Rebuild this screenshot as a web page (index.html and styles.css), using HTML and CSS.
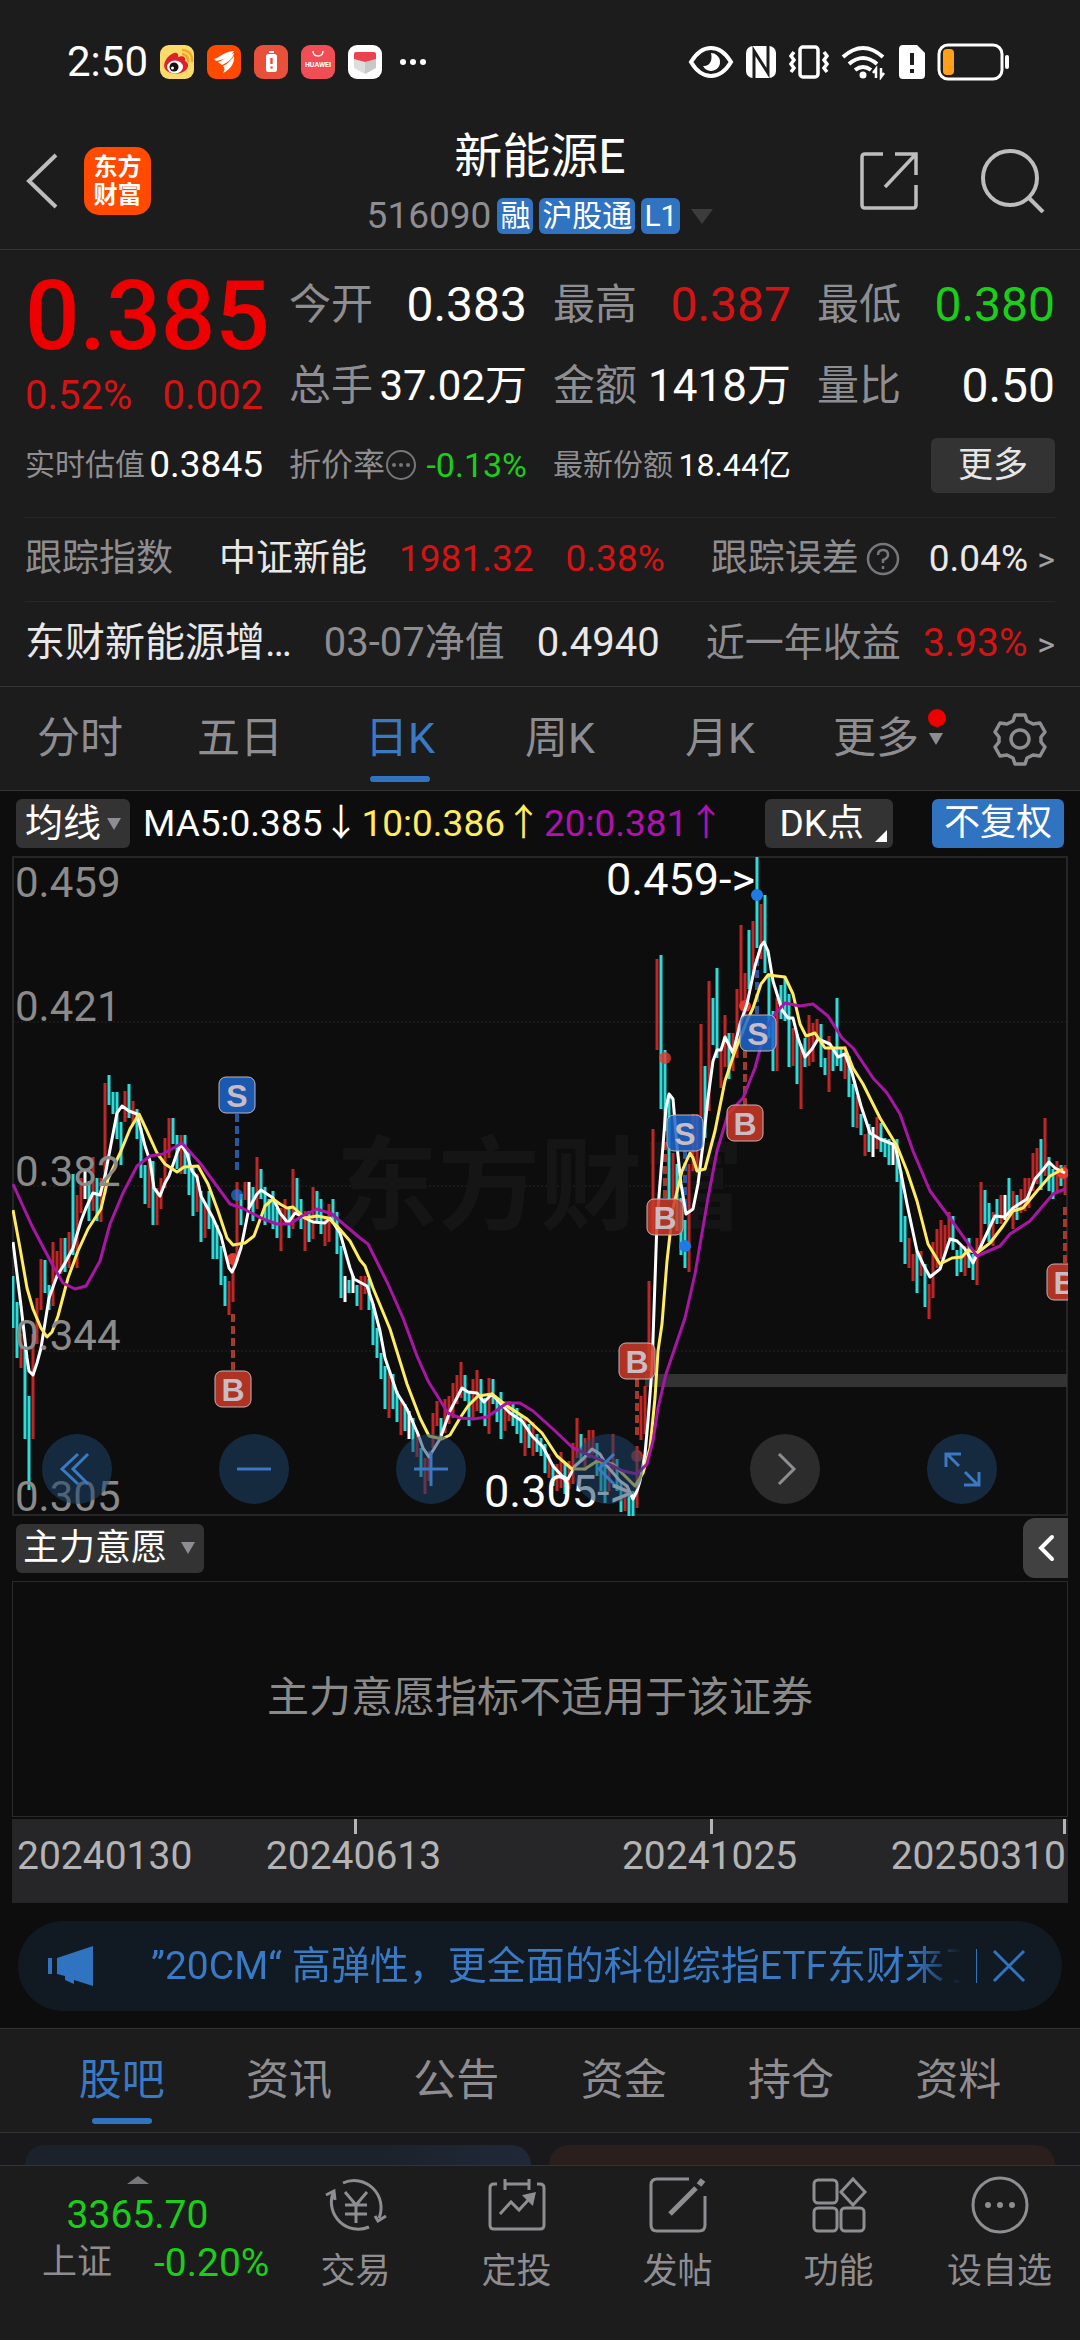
FILE: index.html
```html
<!DOCTYPE html>
<html lang="zh-CN">
<head>
<meta charset="utf-8">
<meta name="viewport" content="width=device-width, initial-scale=1">
<title>新能源E 516090</title>
<link rel="stylesheet" href="styles.css">
</head>
<body>
<div class="status">
  <span class="clock">2:50</span>
  <div class="status-apps">
    <svg class="app" viewBox="0 0 34 34"><rect width="34" height="34" rx="9" fill="#fbdc6a"/><path d="M22 9q7 1 6 8M22 5q11 1 10 12" fill="none" stroke="#f6a623" stroke-width="2.4"/><path d="M14 8c3-1 5 1 4 4 5-2 8 0 7 4 4 2 4 6 1 9-5 5-17 5-21-1-3-6 3-14 9-16z" fill="#e0202a"/><ellipse cx="15" cy="22" rx="8" ry="6.500" fill="#fff"/><circle cx="14" cy="22" r="4.500" fill="#111"/><circle cx="12.500" cy="23" r="1.500" fill="#fff"/></svg>
    <svg class="app" viewBox="0 0 34 34"><rect width="34" height="34" rx="9" fill="#ff4a00"/><path d="M7 14c5-1 9-7 20-8-2 4-8 8-18 10zM11 17c6-2 9-6 16-9-1 5-5 9-12 12zM16 21c5-2 8-6 11-10 1 7-4 14-11 17 2-3 2-5 0-7z" fill="#fff"/></svg>
    <svg class="app" viewBox="0 0 34 34"><rect width="34" height="34" rx="9" fill="#e8503a"/><rect x="12" y="9" width="11" height="18" rx="2.500" fill="#fff"/><path d="M15 6h5v2h-5z" fill="#fff"/><path d="M17.500 13v6M17.500 21.500v2" stroke="#e8503a" stroke-width="2.400"/></svg>
    <svg class="app" viewBox="0 0 34 34"><rect width="34" height="34" rx="9" fill="#f04d55"/><path d="M12 6q0 5 5 5t5-5" fill="none" stroke="#fff" stroke-width="1.400"/><text x="17" y="22" text-anchor="middle" class="app-name">HUAWEI</text></svg>
    <svg class="app" viewBox="0 0 34 34"><rect width="34" height="34" rx="9" fill="#fff"/><path d="M6 13l11 4v12l-11-6z" fill="#ddd"/><path d="M28 13l-11 4v12l11-6z" fill="#c8c8c8"/><path d="M8 7h18q2 0 2 2v5l-11 3-11-3V9q0-2 2-2z" fill="#e9434d"/></svg>
    <svg class="dots" viewBox="0 0 28 8" fill="#fff"><circle cx="4" cy="4" r="3"/><circle cx="14" cy="4" r="3"/><circle cx="24" cy="4" r="3"/></svg>
  </div>
  <div class="status-icons">
    <svg width="46" height="36" viewBox="0 0 46 36" fill="none" stroke="#fff" stroke-width="4"><path d="M3 18C9 8 15 4 23 4s14 4 20 14C37 28 31 32 23 32S9 28 3 18z"/><path d="M23 9a9 9 0 1 1-8 13c6 1 10-5 8-13z" fill="#fff" stroke="none"/></svg>
    <svg width="32" height="36" viewBox="0 0 32 36"><rect x="1" y="2" width="30" height="32" rx="7" fill="#fff"/><path d="M9 34V7l14 22V2" fill="none" stroke="#1c1c1c" stroke-width="3"/></svg>
    <svg width="42" height="36" viewBox="0 0 42 36" fill="none" stroke="#fff" stroke-width="3.500"><rect x="12" y="3" width="18" height="30" rx="3"/><path d="M6 8l-3 4 3 4-3 4 3 4-3 4M36 8l3 4-3 4 3 4-3 4 3 4"/></svg>
    <svg width="46" height="36" viewBox="0 0 46 36" fill="none" stroke="#fff" stroke-width="4"><path d="M2 13q20-18 40 0M8 20q14-12 28 0M14 26q8-6 16 0"/><circle cx="22" cy="31" r="3.500" fill="#fff" stroke="none"/><path d="M35 34v-9l-3 4M40 24v9l3-4" stroke-width="2.500"/></svg>
    <svg width="28" height="34" viewBox="0 0 28 34"><path d="M5 0h14l8 8v22q0 4-4 4H5q-4 0-4-4V4q0-4 4-4z" fill="#fff"/><path d="M14 8v12M14 24v4" stroke="#1c1c1c" stroke-width="4"/></svg>
    <svg width="74" height="38" viewBox="0 0 74 38"><rect x="2" y="2" width="63" height="34" rx="9" fill="none" stroke="#fff" stroke-width="3"/><rect x="6" y="6" width="11" height="26" rx="4" fill="#ff9f1a"/><path d="M70 14v10" stroke="#fff" stroke-width="4" stroke-linecap="round"/></svg>
  </div>
</div>

<header class="header">
  <div class="header-side">
    <button class="icon-btn" aria-label="返回"><svg width="34" height="56" viewBox="0 0 34 56" fill="none" stroke="#bdbdbd" stroke-width="4"><path d="M31 2L4 28l27 26"/></svg></button>
    <a class="logo" href="#"><span>东方</span><span>财富</span></a>
  </div>
  <div class="header-title">
    <h1>新能源E</h1>
    <div class="code"><span>516090</span><b>融</b><b>沪股通</b><b>L1</b><i class="tri tri-code"></i></div>
  </div>
  <div class="header-side header-right">
    <button class="icon-btn" aria-label="分享"><svg width="60" height="60" viewBox="0 0 60 60" fill="none" stroke="#bdbdbd" stroke-width="3.500"><path d="M24 3H6q-3 0-3 3v48q0 3 3 3h48q3 0 3-3V34M36 3h21v21M57 3L26 36"/></svg></button>
    <button class="icon-btn" aria-label="搜索"><svg width="64" height="64" viewBox="0 0 64 64" fill="none" stroke="#bdbdbd" stroke-width="4"><circle cx="29" cy="29" r="27"/><path d="M48 49l14 14"/></svg></button>
  </div>
</header>

<section class="quote">
  <div class="grid">
    <div class="last"><strong>0.385</strong><div class="change"><span>0.52%</span><span>0.002</span></div></div>
    <div class="cell"><span>今开</span><em class="lg">0.383</em></div>
    <div class="cell"><span>最高</span><em class="lg up">0.387</em></div>
    <div class="cell"><span>最低</span><em class="lg down">0.380</em></div>
    <div class="cell"><span>总手</span><em>37.02万</em></div>
    <div class="cell"><span>金额</span><em class="md">1418万</em></div>
    <div class="cell"><span>量比</span><em class="lg">0.50</em></div>
    <div class="cell minor"><span>实时估值</span><em class="fit">0.3845</em></div>
    <div class="cell minor"><span class="ratio">折价率<svg width="32" height="32" viewBox="0 0 32 32"><circle cx="16" cy="16" r="14" fill="none" stroke="#77777b" stroke-width="2"/><g fill="#77777b"><circle cx="9" cy="16" r="2"/><circle cx="16" cy="16" r="2"/><circle cx="23" cy="16" r="2"/></g></svg></span><em class="down disc">-0.13%</em></div>
    <div class="cell minor"><span>最新份额</span><em>18.44亿</em></div>
    <div class="cell minor end"><button class="more">更多</button></div>
  </div>
  <a class="line" href="#">
    <span class="line-main first"><span class="dim">跟踪指数</span><span class="name">中证新能</span><span class="up">1981.32</span><span class="up">0.38%</span></span>
    <span class="line-side"><span class="dim hint">跟踪误差<svg width="34" height="34" viewBox="0 0 34 34" fill="none" stroke="#77777b" stroke-width="2.500"><circle cx="17" cy="17" r="15"/><path d="M12 13q0-5 5-5t5 5q0 3-5 5v3M17 24v3"/></svg></span><span>0.04% <i class="gt">&gt;</i></span></span>
  </a>
  <a class="line wide" href="#">
    <span class="line-main"><span>东财新能源增…</span><span class="dim">03-07净值</span><span>0.4940</span></span>
    <span class="line-side"><span class="dim">近一年收益</span><span><span class="up">3.93%</span> <i class="gt">&gt;</i></span></span>
  </a>
</section>

<nav class="periods">
  <button>分时</button><button>五日</button><button class="on">日K</button><button>周K</button><button>月K</button><button class="more-tab"><span>更多</span><i class="tri tri-tab"></i></button>
  <button class="gear" aria-label="设置"><svg width="54" height="54" viewBox="0 0 54 54" fill="none" stroke="#8e8e92" stroke-width="3.500" stroke-linejoin="round"><path d="M22 3h10l2 6 6 3 7-1 5 9-4 5v5l4 5-5 9-7-1-6 3-2 6H22l-2-6-6-3-7 1-5-9 4-5v-5l-4-5 5-9 7 1 6-3z"/><circle cx="27" cy="27" r="9"/></svg></button>
</nav>

<main class="charts">
  <div class="ma">
    <button class="chip">均线<i class="tri"></i></button>
    <span class="ma-values"><span>MA5:0.385↓</span><span class="y">10:0.386↑</span><span class="p">20:0.381↑</span></span>
    <button class="chip dk">DK点</button>
    <button class="chip blue">不复权</button>
  </div>
  <div class="kline">
    <svg class="plot" viewBox="12 0 1056 660">
      <g fill="none" stroke="#262626" stroke-width="2"><path d="M13 1H1067V659H13z"/><path d="M13 166H1067M13 330H1067M13 495H1067" stroke-dasharray="2 2" stroke-width="1"/></g>
      <text class="mark" x="540" y="366" text-anchor="middle">东方财富</text>
      <path d="M645 518H1067V531H645z" fill="#333"/>
      <path class="r" d="M21 478V512M33 478V583M37 442V488M41 403V454M53 386V450M57 395V422M61 382V418M69 376V412M77 339V412M81 322V357M93 301V355M101 322V366M105 227V338M125 235V266M133 245V268M149 302V352M157 332V369M161 322V353M165 282V332M169 262V302M181 279V318M197 318V356M205 348V382M229 425V459M233 402V446M237 326V405M245 326V344M257 301V353M281 352V395M285 343V368M293 313V373M305 355V395M313 331V383M325 362V390M329 348V386M361 420V454M365 420V438M389 517V562M401 545V579M417 575V601M425 602V638M429 595V625M433 557V592M437 545V570M445 543V577M449 540V568M453 527V562M457 519V548M461 506V542M473 523V563M477 514V555M489 522V578M505 545V575M509 545V565M525 562V600M533 566V600M549 598V622M557 608V635M561 596V632M569 605V633M573 587V628M577 562V602M585 582V615M589 574V602M593 574V598M609 605V635M613 578V615M625 628V655M637 590V652M641 540V584M645 530V578M649 425V515M653 273V378M657 103V194M673 297V345M689 308V416M693 258V315M697 258V315M701 168V262M709 125V255M721 192V232M725 159V211M733 177V215M737 133V202M741 69V150M745 117V162M753 65V118M761 48V103M777 142V215M793 172V210M801 188V253M809 159V210M813 167V206M817 163V185M829 180V236M845 190V223M857 240V272M865 278V300M877 261V293M909 382V412M913 398V425M921 395V420M929 428V463M933 386V442M937 373V412M941 364V403M945 369V398M949 356V383M965 390V420M977 382V429M981 326V392M993 356V390M1001 339V368M1013 335V373M1021 333V357M1025 322V355M1029 322V352M1033 297V335M1037 292V328M1045 262V320M1057 305V335M1065 309V339"/>
      <path class="c" d="M13 420V472M17 446V502M25 492V583M29 540V634M45 404V437M49 429V454M65 382V416M73 318V399M89 325V365M97 322V365M109 219V249M113 236V258M117 236V283M121 266V309M129 228V262M137 253V283M141 272V322M145 309V348M153 305V369M173 262V288M177 279V313M185 279V318M189 295V339M193 309V360M201 335V386M209 335V373M213 362V403M217 369V403M221 390V429M225 420V450M241 338V369M253 331V365M261 313V343M265 331V369M269 343V364M273 335V373M277 352V382M289 352V382M297 322V358M301 343V373M309 355V386M317 335V365M321 343V378M333 343V368M337 356V398M341 390V442M349 424V437M357 429V450M369 423V454M373 448V489M377 472V502M381 497V523M385 510V553M393 518V553M397 535V566M405 548V575M413 562V596M421 592V621M441 562V580M465 519V545M469 535V570M481 523V557M485 542V570M493 523V548M497 542V566M501 536V583M513 548V570M517 552V578M521 558V587M529 568V592M537 578V596M541 582V600M545 588V617M553 608V630M565 608V638M581 578V605M597 587V620M601 605V635M605 608V647M617 603V635M621 625V656M629 635V660M633 635V660M661 99V253M665 194V275M669 242V343M677 308V375M681 342V399M685 364V412M705 210V282M713 142V189M717 112V202M729 177V223M749 74V133M757 1V92M765 39V117M769 117V182M773 155V215M781 129V163M785 122V165M789 138V211M797 178V228M805 182V211M821 168V211M825 202V219M833 192V215M837 142V210M841 193V215M849 200V241M853 228V271M861 258V279M869 268V296M881 267V296M885 282V301M889 283V309M897 283V326M901 315V386M905 360V408M917 395V437M925 408V451M953 360V394M957 394V420M961 390V416M969 382V412M973 398V424M985 334V368M989 347V386M997 343V368M1009 322V360M1017 339V364M1041 283V334M1049 301V335M1053 313V343M1061 309V330"/>
      <path class="w" d="M85 315V343M249 326V352M345 420V446M353 420V437M409 555V583M873 271V301M893 288V309M1005 339V364"/>
      <g fill="#e63b2e"><circle cx="233" cy="403" r="6"/><circle cx="637" cy="600" r="6" opacity=".7"/><circle cx="665" cy="202" r="6" opacity=".8"/><circle cx="745" cy="150" r="6"/><circle cx="1063" cy="317" r="6"/></g>
      <g fill="#1e7be6"><circle cx="237" cy="339" r="6" opacity=".7"/><circle cx="685" cy="390" r="6"/><circle cx="757" cy="39" r="6"/></g>
      <g fill="none" stroke-width="4" stroke-dasharray="8 4"><path stroke="#2857a4" d="M237 258V314M685 295V352M757 102V158"/><path stroke="#a33a2c" d="M233 458V514M637 523V580M665 286V343M745 194V249M1065 351V408"/></g>
      <g fill="none" stroke-width="3" stroke-linejoin="round">
        <polyline stroke="#fff" points="13,386 21,450 27,502 29,515 33,519 37,507 41,492 49,442 57,420 65,407 73,392 81,365 86,352 93,337 100,339 105,320 112,283 117,257 122,250 129,255 137,258 145,290 150,305 154,332 160,340 165,327 169,320 177,297 181,288 187,298 192,315 197,321 201,340 213,362 221,380 229,412 232,416 235,410 241,392 249,352 257,338 261,334 273,342 280,357 288,367 295,357 305,362 313,366 325,367 330,362 340,377 350,412 354,423 367,430 373,448 380,475 385,502 397,537 407,553 418,578 423,592 429,601 440,583 450,555 462,532 468,536 477,537 484,546 492,538 500,547 510,557 522,565 532,580 543,591 553,610 562,620 568,623 575,610 583,603 592,593 600,598 607,610 620,625 627,630 633,643 637,635 640,625 645,598 648,565 652,512 655,425 657,365 662,302 666,252 669,238 673,243 677,290 681,328 686,358 693,353 698,328 703,288 708,242 713,205 717,194 721,194 725,181 733,197 740,168 747,148 755,110 761,90 764,86 768,95 773,125 782,154 788,162 793,162 798,182 805,201 812,193 818,183 830,188 838,201 845,198 852,217 861,250 870,277 880,283 895,289 900,312 907,348 917,395 923,408 930,421 940,413 950,383 957,385 965,393 973,407 980,392 987,377 995,360 1005,361 1013,352 1027,343 1035,323 1042,315 1049,306 1055,312 1065,317"/>
        <polyline stroke="#ffec61" points="13,354 20,392 27,432 33,453 41,472 47,481 52,476 58,460 68,422 78,395 88,373 101,353 108,323 121,295 130,273 139,258 147,275 157,297 165,308 177,316 184,311 198,310 208,328 218,355 227,382 233,389 245,387 254,380 265,350 273,343 280,348 287,352 293,351 305,362 317,360 328,362 337,370 350,385 360,404 365,410 373,432 390,473 407,528 420,562 429,580 442,583 450,579 460,562 468,550 478,540 492,538 507,550 527,563 542,577 557,600 572,613 585,613 597,605 613,608 623,618 635,630 643,617 650,592 655,542 658,495 662,468 667,405 673,352 682,315 690,297 693,302 697,315 705,313 715,275 725,225 735,195 747,165 753,152 761,128 768,119 785,121 793,138 800,168 806,180 815,177 825,192 845,192 853,212 863,228 880,262 897,290 907,315 917,345 928,388 940,408 952,402 962,401 968,394 977,397 990,387 1003,370 1013,355 1023,352 1037,335 1050,320 1063,313"/>
        <polyline stroke="#a916a6" points="13,328 32,370 52,408 63,427 75,433 86,430 100,405 110,368 123,337 137,310 150,300 163,298 182,287 200,307 230,348 242,352 263,363 277,368 290,368 302,360 317,353 332,358 340,365 360,382 368,388 388,428 403,462 417,500 428,525 448,557 460,562 473,563 487,561 507,547 520,547 533,555 553,573 573,592 603,605 623,615 637,618 647,608 653,585 658,552 666,518 685,462 695,418 708,342 717,295 728,258 743,242 755,212 765,175 775,158 785,147 800,150 813,148 828,160 842,182 853,192 873,222 887,237 900,258 913,295 930,335 950,362 977,400 1000,390 1010,378 1030,365 1053,338 1065,333"/>
      </g>
      <g class="flag"><rect class="s" x="219" y="221" width="36" height="36" rx="7"/><rect class="s" x="667" y="259" width="36" height="36" rx="7"/><rect class="s" x="740" y="159" width="36" height="36" rx="7"/><rect class="b" x="215" y="515" width="36" height="36" rx="7"/><rect class="b" x="619" y="487" width="36" height="36" rx="7"/><rect class="b" x="647" y="343" width="36" height="36" rx="7"/><rect class="b" x="727" y="249" width="36" height="36" rx="7"/><rect class="b" x="1047" y="408" width="36" height="36" rx="7"/>
      <text x="237" y="251">S</text><text x="685" y="289">S</text><text x="758" y="189">S</text><text x="233" y="545">B</text><text x="637" y="517">B</text><text x="665" y="373">B</text><text x="745" y="279">B</text><text x="1065" y="438">B</text></g>
      <g class="axis"><text x="15" y="41">0.459</text><text x="15" y="165">0.421</text><text x="15" y="330">0.382</text><text x="15" y="494">0.344</text><text x="15" y="655">0.305</text></g>
      <g class="peak"><text x="755" y="39">0.459-&gt;</text><text x="633" y="651">0.305-&gt;</text></g>
    </svg>
    <div class="tools">
      <button aria-label="最左"><svg viewBox="0 0 70 70"><path d="M36 20L20 35l16 15M46 20L31 35l15 15"/></svg></button>
      <button aria-label="缩小"><svg viewBox="0 0 70 70"><path d="M18 35h34"/></svg></button>
      <button aria-label="放大"><svg viewBox="0 0 70 70"><path d="M18 35h34M35 18v34"/></svg></button>
      <button aria-label="左移"><svg viewBox="0 0 70 70"><path d="M41 20L26 35l15 15"/></svg></button>
      <button class="off" aria-label="右移"><svg viewBox="0 0 70 70"><path d="M29 20l15 15-15 15"/></svg></button>
      <button aria-label="全屏"><svg viewBox="0 0 70 70"><path d="M19 33V20h15M20 20l12 12M52 38v13H37M51 51L38 38"/></svg></button>
    </div>
  </div>
  <div class="sub-head">
    <button class="chip sub">主力意愿<i class="tri"></i></button>
    <button class="fold" aria-label="展开"><svg width="18" height="28" viewBox="0 0 18 28" fill="none" stroke="#fff" stroke-width="4" stroke-linecap="round"><path d="M15 3L4 14l11 11"/></svg></button>
  </div>
  <div class="sub-box">主力意愿指标不适用于该证券</div>
  <div class="dates"><span>20240130</span><span class="tick">20240613</span><span class="tick">20241025</span><span class="tick-end">20250310</span></div>
  <div class="notice">
    <svg width="46" height="40" viewBox="0 0 46 40" fill="#3073c1"><path d="M0 12h4v16H0zM9 12L45 0v40l-19-6v4l-9-4v-4l-8-2z"/></svg>
    <a href="#">”20CM“ 高弹性，更全面的科创综指ETF东财来了</a>
    <button class="icon-btn close" aria-label="关闭"><svg width="34" height="34" viewBox="0 0 34 34" stroke="#3073c1" stroke-width="3"><path d="M2 2l30 30M32 2L2 32"/></svg></button>
  </div>
</main>

<nav class="tabs"><button class="on">股吧</button><button>资讯</button><button>公告</button><button>资金</button><button>持仓</button><button>资料</button></nav>
<div class="feed"><div class="card blue-card"></div><div class="card red-card"></div></div>

<footer class="bottom">
  <a class="index" href="#"><i class="tri-up"></i><span class="down">3365.70</span><span class="index-row"><span>上证</span><span class="down">-0.20%</span></span></a>
  <a href="#"><svg viewBox="0 0 64 58"><path d="M19 7a27 27 0 0 1 36 35M45 51A27 27 0 0 1 9 17M2 19l8-4 1 9M51 40l3 5 8-5M21 16l11 13 11-13M21 29h22M21 38h22M32 29v18"/></svg>交易</a>
  <a href="#"><svg viewBox="0 0 64 58"><path d="M12 8H9q-4 0-4 4v37q0 4 4 4h46q4 0 4-4V12q0-4-4-4h-3M20 3v11M44 3v11M20 8h24M15 38l11-12 8 8 12-13"/><path d="M40 20l9-2-2 9z" fill="#8e8e92"/></svg>定投</a>
  <a href="#"><svg viewBox="0 0 64 58"><path d="M43 3H11q-6 0-6 6v40q0 6 6 6h42q6 0 6-6V20"/><path d="M24 38l26-26" stroke-width="5"/><path d="M53 9l4-5" stroke-width="6"/></svg>发帖</a>
  <a href="#"><svg viewBox="0 0 64 58"><rect x="7" y="4" width="23" height="23" rx="4"/><rect x="7" y="32" width="23" height="23" rx="4"/><rect x="34" y="32" width="23" height="23" rx="4"/><path d="M46 3l12 13-12 13-12-13z"/></svg>功能</a>
  <a href="#"><svg viewBox="0 0 64 58"><circle cx="32" cy="29" r="27"/><g fill="#8e8e92" stroke="none"><circle cx="20" cy="29" r="3"/><circle cx="32" cy="29" r="3"/><circle cx="44" cy="29" r="3"/></g></svg>设自选</a>
</footer>
</body>
</html>
```
FILE: styles.css
```css
* { box-sizing: border-box; }
body {
  margin: 0;
  min-height: 100vh;
  display: flex;
  flex-direction: column;
  background: #1c1c1c;
  color: #fff;
  font-family: Roboto, "Noto Sans CJK SC", sans-serif;
  font-size: 37px;
  line-height: 52px;
  white-space: nowrap;
}
button { margin: 0; padding: 0; border: 0; background: none; color: inherit; font: inherit; }
a { color: inherit; text-decoration: none; }
i, em { font-style: normal; }
svg { display: block; flex: none; }

.up { color: #d41414; }
.down { color: #1ace1a; }
.tri { width: 0; border: 7px solid transparent; border-top: 12px solid #8e8e92; border-bottom: 0; }

/* status bar */
.status { display: flex; align-items: center; padding: 36px 69px 36px 67px; }
.clock { font-size: 42px; }
.status-apps { display: flex; align-items: center; gap: 13px; margin-left: 12px; }
.app { width: 34px; height: 34px; }
.app-name { font: 700 7px Roboto, sans-serif; fill: #fff; }
.dots { width: 28px; height: 8px; margin-left: 4px; }
.status-icons { display: flex; align-items: center; gap: 11px; margin-left: auto; }

/* title bar */
.header {
  display: grid;
  grid-template-columns: 1fr auto 1fr;
  align-items: center;
  padding: 5px 25px 9px;
  border-bottom: 1px solid #333;
}
.header-side { display: flex; align-items: center; gap: 25px; padding-bottom: 8px; }
.header-right { justify-content: flex-end; gap: 62px; padding-right: 10px; }
.logo {
  display: flex;
  flex-direction: column;
  justify-content: center;
  width: 67px;
  height: 68px;
  border-radius: 15px;
  background: #ff4a00;
  font-size: 24px;
  font-weight: 700;
  line-height: 28px;
  text-align: center;
}
.header-title { text-align: center; }
h1 { margin: 0 0 7px; font-size: 48px; font-weight: 400; line-height: 56px; }
.code { display: flex; align-items: center; justify-content: center; gap: 6px; line-height: 48px; font-size: 37px; color: #8e8e92; }
.code b { padding: 0 3px; border-radius: 6px; background: #3073c1; color: #fff; font-size: 30px; font-weight: 400; line-height: 36px; }
.tri-code { border-width: 15px 11px 0; border-top-color: #3c3c3c; margin-left: 5px; }

/* quote block */
.quote { padding: 14px 25px 0; border-bottom: 1px solid #333; }
.grid { display: grid; grid-template-columns: repeat(4, minmax(0, 1fr)); grid-template-rows: 81px 81px 78px; column-gap: 26px; padding-bottom: 13px; }
.last { grid-row: span 2; padding-top: 6px; }
.last strong { display: block; color: #ee0000; font-size: 96px; font-weight: 500; line-height: 92px; }
.change { display: flex; justify-content: space-between; padding-top: 8px; font-size: 40px; color: #d41414; }
.cell { display: flex; align-items: center; justify-content: space-between; font-size: 42px; }
.cell > span { color: #8e8e92; }
.cell .lg { font-size: 48px; }
.cell .md { font-size: 44px; }
.minor, .cell.minor em { font-size: 32px; }
.minor > span { font-size: 30px; }
.minor > .ratio { font-size: 32px; }
.cell.minor .disc { font-size: 34px; }
.cell.minor .fit { font-size: 37px; }
.ratio { display: flex; align-items: center; }
.end { justify-content: flex-end; }
.more { padding: 0 27px; border-radius: 6px; background: #333; color: #e6e6e6; font-size: 35px; line-height: 55px; }
.line { display: flex; gap: 46px; padding: 15px 0 16px; border-top: 1px solid #272727; color: #e8e8e8; }
.wide { font-size: 40px; }
.line-main { display: flex; gap: 32px; }
.first > :first-child { margin-right: 14px; }
.line-side { display: flex; flex: 1; justify-content: space-between; }
.dim { color: #8e8e92; }
.wide .line-side { font-size: 39px; }
.hint { display: flex; align-items: center; gap: 7px; }
.gt { color: #a0a0a4; font-size: 34px; }

/* period tabs and content tabs */
.periods, .tabs { display: grid; border-bottom: 1px solid #333; font-size: 43px; line-height: 103px; color: #8e8e92; }
.periods { grid-template-columns: repeat(6, 160fr) 120fr; }
.tabs { grid-template-columns: repeat(6, 1fr); }
.periods button, .tabs button { position: relative; }
.on { color: #3a79c4; }
.on::after { content: ""; position: absolute; bottom: 8px; left: 50%; width: 60px; height: 6px; margin-left: -30px; border-radius: 3px; background: #3073c1; }
.gear, .more-tab { display: flex; align-items: center; justify-content: center; }
.more-tab { gap: 10px; padding-left: 16px; }
.more-tab::after { content: ""; position: absolute; top: 22px; right: 14px; width: 18px; height: 18px; border-radius: 50%; background: #ee0000; }

/* charts */
.charts { padding-bottom: 17px; background: #0d0d0d; }
.ma { display: flex; align-items: center; padding: 8px 16px; }
.chip { display: flex; align-items: center; gap: 6px; padding: 0 9px; border-radius: 6px; background: #333; font-size: 38px; line-height: 49px; }
.ma-values { display: flex; gap: 2px; margin-left: 13px; line-height: 49px; }
.y { color: #ffec61; }
.p { color: #b013ad; }
.dk { position: relative; margin-left: auto; padding: 0 29px 0 14px; font-size: 37px; }
.dk::after { content: ""; position: absolute; right: 6px; bottom: 6px; border: 6px solid; border-color: transparent #fff #fff transparent; }
.blue { margin-left: 39px; padding: 0 12px; background: #3073c1; font-size: 36px; }
.kline { position: relative; margin: 0 12px; }
.plot { width: 100%; height: auto; overflow: hidden; }
.mark { font-size: 102px; font-weight: 700; fill: #151515; }
.r, .c, .w { fill: none; stroke-width: 3; }
.r { stroke: #c02626; }
.c { stroke: #2ddcda; }
.w { stroke: #fff; }
.flag { font: 700 32px "Liberation Sans", sans-serif; text-anchor: middle; fill: #c9bcc4; }
.flag rect { stroke: #c4b4b8; stroke-width: 1; fill-opacity: .85; }
.s { fill: #1e66cc; }
.b { fill: #ce3a28; }
.axis { font-size: 42px; fill: #8a8a8a; }
.peak { font-size: 45px; fill: #fff; text-anchor: end; }
.tools { position: absolute; right: 0; bottom: 12px; left: 0; display: flex; justify-content: space-between; padding: 0 71px 0 30px; }
.tools button { width: 70px; height: 70px; border-radius: 50%; background: rgba(30, 66, 106, .55); }
.tools svg { fill: none; stroke: #3a79c4; stroke-width: 3; }
.tools .off { background: #2c2c2c; }
.tools .off svg { stroke: #8e8e92; }
.sub-head { display: flex; align-items: center; justify-content: space-between; padding: 2px 12px 3px 16px; }
.sub { gap: 14px; padding: 0 9px 0 7px; font-size: 36px; }
.fold { display: flex; align-items: center; justify-content: center; width: 45px; height: 60px; border-radius: 12px 0 0 12px; background: #414141; }
.sub-box { margin: 0 12px 2px; padding: 90px 0 92px; border: 1px solid #2a2a2a; text-align: center; font-size: 42px; color: #8a8a8a; }
.dates { display: grid; grid-template-columns: auto 74fr auto 182fr auto 94fr auto; margin: 0 12px; padding: 11px 2px 21px 5px; background: #262628; color: #b4b4b4; font-size: 39px; }
.dates span { position: relative; grid-row: 1; }
.dates span:nth-child(2) { grid-column: 3; }
.dates span:nth-child(3) { grid-column: 5; }
.dates span:nth-child(4) { grid-column: 7; }
.tick::before, .tick-end::before { content: ""; position: absolute; top: -11px; left: 50%; width: 3px; height: 15px; background: #b4b4b4; }
.tick-end::before { right: 0; left: auto; }
.notice { display: flex; align-items: center; margin: 18px 18px 0; padding: 19px 36px 19px 30px; border-radius: 45px; background: #111a23; color: #3a79c4; font-size: 39px; }
.notice a { flex: 1; min-width: 0; margin: 0 14px 0 57px; overflow: hidden; -webkit-mask-image: linear-gradient(90deg, #000 94%, transparent); mask-image: linear-gradient(90deg, #000 94%, transparent); }
.close { padding-left: 15px; border-left: 1px solid #3073c1; }

.tabs { padding: 0 38px; border-top: 1px solid #333; }
.feed { flex: 1; display: flex; gap: 18px; padding: 12px 25px 0; background: #19191b; }
.card { flex: 1; min-height: 20px; border-radius: 24px 24px 0 0; }
.blue-card { background: linear-gradient(90deg, #1c222b 70%, #202839); }
.red-card { background: #2b1f1e; }

/* bottom bar */
.bottom { display: grid; grid-template-columns: 275fr repeat(5, 161fr); border-top: 1px solid #333; padding-bottom: 43px; color: #8e8e92; font-size: 35px; }
.bottom a { display: flex; flex-direction: column; align-items: center; padding-top: 10px; }
.bottom a > svg { width: 64px; height: 58px; margin-bottom: 12px; fill: none; stroke: #8e8e92; stroke-width: 3; }
.tri-up { border: 11px solid transparent; border-top: 0; border-bottom: 8px solid #77777b; }
.bottom .index { line-height: 48px; font-size: 39px; }
.index > .down { margin-top: 7px; }
.index-row { display: flex; gap: 42px; align-self: flex-start; padding-left: 42px; font-size: 35px; }
.index-row .down { font-size: 39px; }
```
